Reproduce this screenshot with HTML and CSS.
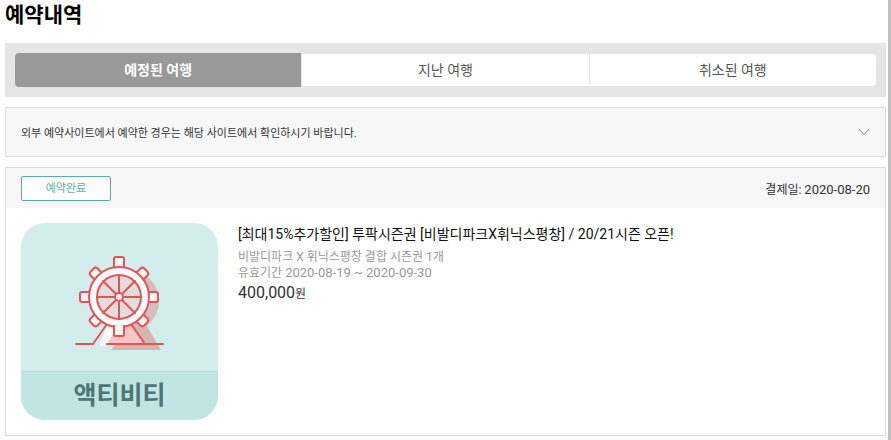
FILE: index.html
```html
<!DOCTYPE html>
<html lang="ko">
<head>
    <meta charset="UTF-8">
    <title>예약내역</title>
    <meta name="viewport" content="width=device-width, initial-scale=1.0">
    <link rel="stylesheet" href="styles.css">
</head>
<body>

    <main>
        <h1>예약내역</h1>

        <nav class="tabs">
            <button type="button" class="tab active">예정된 여행</button>
            <button type="button" class="tab">지난 여행</button>
            <button type="button" class="tab">취소된 여행</button>
        </nav>

        <button type="button" class="notice">
            <span>외부 예약사이트에서 예약한 경우는 해당 사이트에서 확인하시기 바랍니다.</span>
            <svg width="12" height="8" viewBox="0 0 12 8" fill="none" stroke="#888"><path d="M1 1l5 5.5L11 1"/></svg>
        </button>

        <section class="booking">
            <div class="booking-head">
                <span class="status">예약완료</span>
                <span class="paid">결제일: <span class="date">2020-08-20</span></span>
            </div>

            <div class="booking-body">
                <div class="thumb">
                    <!-- 관람차 -->
                    <svg class="wheel" width="92" height="96" viewBox="0 0 92 96" fill="none" stroke="#e5525a" stroke-width="2" stroke-linecap="round" stroke-linejoin="round">
                        <g stroke="none">
                            <circle cx="55" cy="45" r="31" fill="#d3bfba"/>
                            <path d="M58 70h16l14 24H38z" fill="#d9b5b1"/>
                            <path d="M38 70h20l14 18H29z" fill="#f9c7c5"/>
                            <path d="M34 69h11L33 90h-6z" fill="#fff"/>
                        </g>
                        <path d="M3 88h17l14-20M34 88h56M58 68l14 20"/>
                        <g fill="#fff8ee">
                            <rect x="41" y="1" width="10" height="13" rx="2"/>
                            <rect x="41" y="68" width="10" height="12" rx="2"/>
                            <rect x="7" y="36" width="12" height="10" rx="2"/>
                            <rect x="73" y="36" width="12" height="10" rx="2"/>
                            <g transform="rotate(45 46 41)">
                                <rect x="41" y="3" width="10" height="11" rx="3"/>
                                <rect x="41" y="68" width="10" height="11" rx="3"/>
                                <rect x="8" y="36" width="11" height="10" rx="3"/>
                                <rect x="73" y="36" width="11" height="10" rx="3"/>
                            </g>
                        </g>
                        <circle cx="46" cy="41" r="30" fill="#fff"/>
                        <circle cx="46" cy="41" r="22" fill="#e2dedd"/>
                        <path d="M46 19v44M24 41h44M30 25l32 32M62 25L30 57"/>
                        <circle cx="46" cy="41" r="4" fill="#fff"/>
                        <path d="M41 70v8a2 2 0 0 0 2 2h6a2 2 0 0 0 2-2v-8" fill="#fff8ee"/>
                    </svg>
                    <span class="thumb-label">액티비티</span>
                </div>

                <div class="info">
                    <h2>[최대15%추가할인] 투팍시즌권 [비발디파크X휘닉스평창] / 20/21시즌 오픈!</h2>
                    <p>비발디파크 X 휘닉스평창 결합 시즌권 1개</p>
                    <p>유효기간 <span class="date">2020-08-19 ~ 2020-09-30</span></p>
                    <div class="price">400,000<span>원</span></div>
                </div>
            </div>
        </section>
    </main>

</body>
</html>
```

FILE: styles.css
```css
* {
    box-sizing: border-box;
}

body {
    font-family: Roboto, 'Noto Sans CJK KR', sans-serif;
    margin: 0;
    min-height: 100vh;
    background: white;
    color: #333;
    border-right: 3px solid #bfbfbf;
}

button {
    font-family: inherit;
    border: none;
    cursor: pointer;
}

main {
    padding: 0 2px 4px 5px;
}

h1 {
    margin: 0 0 13px;
    font-size: 21px;
    line-height: 30px;
    font-weight: bold;
    color: #000;
}

.tabs {
    display: flex;
    align-items: center;
    padding: 10px;
    background: #e5e5e5;
}

.tab {
    flex: 1;
    height: 32px;
    padding: 0;
    font-size: 14px;
    line-height: 32px;
    color: #555;
    background: white;
    border-left: 1px solid #e5e5e5;
}

.tab:last-child {
    border-radius: 0 4px 4px 0;
}

.tab.active {
    height: 34px;
    color: white;
    font-weight: bold;
    background: #999;
    border-left: none;
    border-radius: 4px 0 0 4px;
}

.notice {
    display: flex;
    justify-content: space-between;
    align-items: center;
    width: 100%;
    height: 50px;
    margin: 10px 0;
    padding: 0 15px;
    font-size: 11px;
    color: #333;
    background: #f7f7f7;
    border: 1px solid #dcdcdc;
}

.booking {
    border: 1px solid #dcdcdc;
}

.booking-head {
    display: flex;
    justify-content: space-between;
    align-items: center;
    height: 40px;
    padding: 0 15px;
    background: #f7f7f7;
}

.status {
    width: 90px;
    font-size: 11px;
    line-height: 23px;
    text-align: center;
    color: #5fa9ad;
    background: white;
    border: 1px solid #5fa9ad;
    border-radius: 2px;
}

.paid {
    font-size: 12px;
}

.date {
    font-size: 13px;
}

.booking-body {
    display: flex;
    gap: 20px;
    padding: 15px;
}

.thumb {
    display: flex;
    flex-direction: column;
    flex-shrink: 0;
    width: 197px;
    height: 197px;
    border-radius: 24px;
    overflow: hidden;
    background: #d2edeb;
}

.wheel {
    margin: 33px auto 0 52px;
}

.thumb-label {
    margin-top: auto;
    font-size: 25px;
    line-height: 48px;
    font-weight: bold;
    text-align: center;
    color: #4b7775;
    background: #c1e5e2;
    border-top: 1px solid #b4dbd8;
}

.info h2 {
    margin: 0 0 4px;
    font-size: 14px;
    line-height: 22px;
    font-weight: normal;
    color: #111;
}

.info p {
    margin: 0;
    font-size: 12px;
    line-height: 16px;
    color: #999;
}

.price {
    font-size: 16px;
    line-height: 24px;
}

.price span {
    font-size: 12px;
}
```
